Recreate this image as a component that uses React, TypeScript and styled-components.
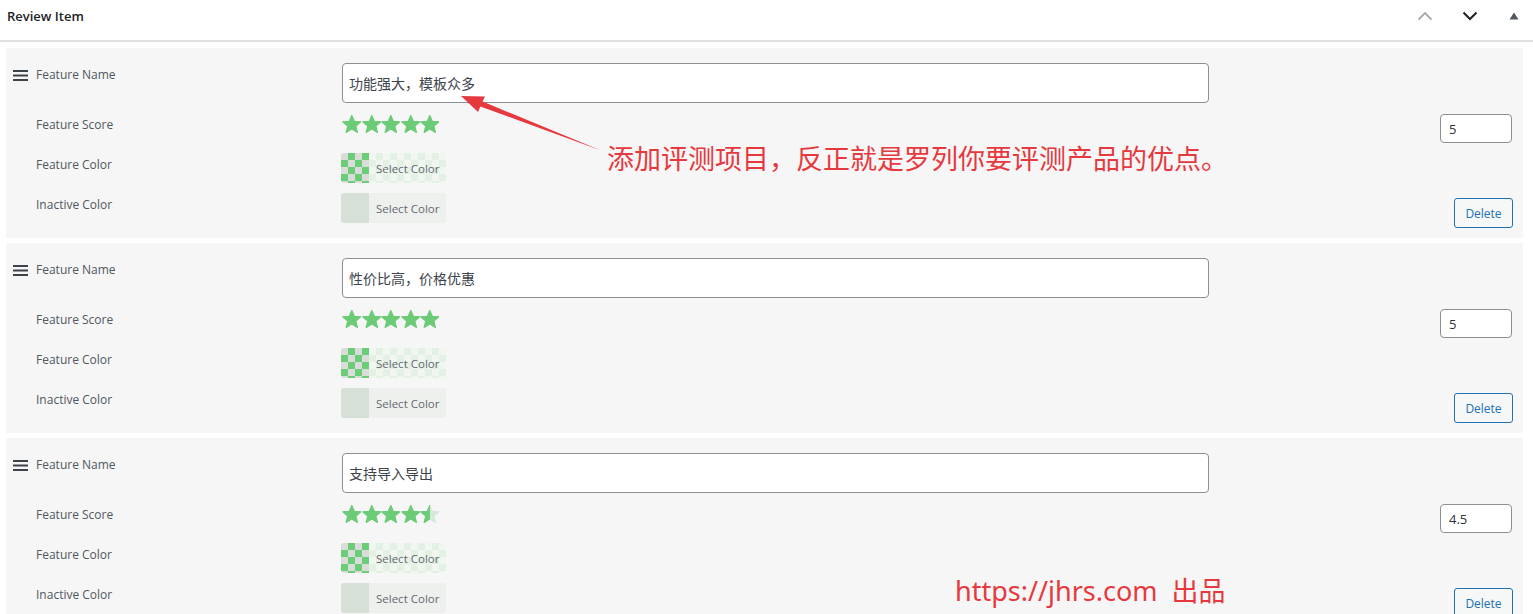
import React from "react";
import styled, { createGlobalStyle } from "styled-components";

const Global = createGlobalStyle`
  html, body { margin: 0; padding: 0; background: #ffffff; }
  body { font-family: "Open Sans", "Noto Sans", "Noto Sans CJK SC", sans-serif; }
  * { box-sizing: border-box; }
`;

const Page = styled.div`
  position: relative;
  width: 1533px;
  overflow: hidden;
`;

const Header = styled.div`
  height: 42px;
  display: flex;
  align-items: flex-start;
  padding: 7px 0 0 7px;
  border-bottom: 2px solid #e0e0e0;
`;

const Title = styled.h2`
  margin: 0;
  font-size: 13px;
  line-height: 18px;
  font-weight: 600;
  color: #1d2327;
  flex: 1;
`;

const HeaderButtons = styled.div`
  display: flex;
  align-items: center;
`;

const IconBtn = styled.span<{ $w: number }>`
  width: ${(p) => p.$w}px;
  height: 18px;
  display: flex;
  align-items: center;
  justify-content: center;
`;

const List = styled.div`
  display: flex;
  flex-direction: column;
  gap: 5px;
  margin: 6px 10px 0 6px;
`;

const Panel = styled.div`
  height: 190px;
  background: #f6f6f6;
  display: flex;
  padding: 15px 10px 0 7px;
`;

const Fields = styled.div`
  display: flex;
  flex-direction: column;
`;

const FieldRow = styled.div<{ $mt: number }>`
  display: grid;
  grid-template-columns: 329px 867px;
  align-items: start;
  margin-top: ${(p) => p.$mt}px;
`;

const Label = styled.div<{ $pad: number }>`
  display: flex;
  align-items: center;
  padding-top: ${(p) => p.$pad}px;
  font-size: 12px;
  line-height: 16px;
  color: #50575e;
`;

const Handle = styled.span`
  width: 23px;
  display: flex;
  align-items: center;
`;

const TextInput = styled.div`
  height: 40px;
  border: 1px solid #8c8f94;
  border-radius: 4px;
  background: #fff;
  display: flex;
  align-items: center;
  padding: 0 0 0 6px;
  font-size: 14px;
  color: #3c434a;
  font-family: "Noto Sans CJK SC", "Open Sans", sans-serif;
  font-weight: 400;
`;

const Stars = styled.div`
  display: flex;
  height: 20px;
  align-items: center;
`;

const ColorButton = styled.div<{ $inactive?: boolean }>`
  width: 105px;
  height: 30px;
  margin-left: -1px;
  border-radius: 3px;
  overflow: hidden;
  display: flex;
  align-items: center;
  background-color: ${(p) => (p.$inactive ? "#eef0ee" : "#f1f6f1")};
  background-image: ${(p) =>
    p.$inactive
      ? "none"
      : "linear-gradient(45deg, #e3f0e4 25%, transparent 25%, transparent 75%, #e3f0e4 75%), linear-gradient(45deg, #e3f0e4 25%, transparent 25%, transparent 75%, #e3f0e4 75%)"};
  background-size: 14px 14px;
  background-position: 0 0, 7px 7px;
`;

const Swatch = styled.span<{ $inactive?: boolean }>`
  width: 28px;
  height: 30px;
  flex: none;
  background-color: ${(p) => (p.$inactive ? "#d6e0d7" : "#d9dcd9")};
  background-image: ${(p) =>
    p.$inactive
      ? "none"
      : "linear-gradient(45deg, #6ccd78 25%, transparent 25%, transparent 75%, #6ccd78 75%), linear-gradient(45deg, #6ccd78 25%, transparent 25%, transparent 75%, #6ccd78 75%)"};
  background-size: 14px 14px;
  background-position: 0 0, 7px 7px;
`;

const SwatchText = styled.span`
  padding-left: 7px;
  font-size: 11.5px;
  color: #646970;
  white-space: nowrap;
`;

const Side = styled.div`
  margin-left: auto;
  display: flex;
  flex-direction: column;
  align-items: flex-end;
  padding-bottom: 10px;
`;

const NumberInput = styled.div`
  width: 72px;
  height: 29px;
  margin-top: 51px;
  margin-right: 1px;
  border: 1px solid #8c8f94;
  border-radius: 4px;
  background: #fff;
  display: flex;
  align-items: center;
  padding-left: 8px;
  font-size: 13px;
  color: #2c3338;
`;

const DeleteButton = styled.button`
  margin-top: auto;
  width: 59px;
  height: 30px;
  border: 1px solid #2271b1;
  border-radius: 3px;
  background: #f6f7f7;
  color: #2271b1;
  font-family: "Open Sans", sans-serif;
  font-size: 12px;
  padding: 0;
`;

const Note = styled.div<{ $x: number; $y: number }>`
  position: absolute;
  left: ${(p) => p.$x}px;
  top: ${(p) => p.$y}px;
  font-size: 27px;
  line-height: 27px;
  color: #e6393f;
  white-space: pre;
  font-family: "Noto Sans", "Noto Sans CJK SC", sans-serif;
`;

const Arrow = styled.svg`
  position: absolute;
  left: 0;
  top: 0;
  pointer-events: none;
`;

const GREEN = "#6bcb77";
const LIGHT = "#d5e9d7";
const STAR =
  "M10 1.2L12.59 7.24L19.3 7.8L14.18 12.16L15.75 18.6L10 15.2L4.25 18.6L5.82 12.16L0.7 7.8L7.41 7.24Z";

function Star({ fill }: { fill: number }) {
  const id = React.useId();
  return (
    <svg width="19.6" height="20" viewBox="0 0 20 20">
      <defs>
        <linearGradient id={id} x1="0" x2="1" y1="0" y2="0">
          <stop offset={fill} stopColor={GREEN} />
          <stop offset={fill} stopColor={LIGHT} />
        </linearGradient>
      </defs>
      <path
        d={STAR}
        fill={`url(#${id})`}
        stroke={`url(#${id})`}
        strokeWidth="1.2"
        strokeLinejoin="round"
      />
    </svg>
  );
}

function Hamburger() {
  return (
    <svg width="15" height="11" viewBox="0 0 15 11">
      <rect x="0" y="0" width="15" height="2" fill="#3c434a" />
      <rect x="0" y="4.5" width="15" height="2" fill="#3c434a" />
      <rect x="0" y="9" width="15" height="2" fill="#3c434a" />
    </svg>
  );
}

type Item = { name: string; score: number };
const items: Item[] = [
  { name: "功能强大，模板众多", score: 5 },
  { name: "性价比高，价格优惠", score: 5 },
  { name: "支持导入导出", score: 4.5 },
];

function Feature({ item }: { item: Item }) {
  return (
    <Panel>
      <Fields>
        <FieldRow $mt={0}>
          <Label $pad={4}>
            <Handle>
              <Hamburger />
            </Handle>
            Feature Name
          </Label>
          <TextInput>{item.name}</TextInput>
        </FieldRow>
        <FieldRow $mt={11}>
          <Label $pad={3}>
            <Handle />
            Feature Score
          </Label>
          <Stars>
            {[0, 1, 2, 3, 4].map((i) => (
              <Star key={i} fill={Math.max(0, Math.min(1, item.score - i))} />
            ))}
          </Stars>
        </FieldRow>
        <FieldRow $mt={19}>
          <Label $pad={4}>
            <Handle />
            Feature Color
          </Label>
          <ColorButton>
            <Swatch />
            <SwatchText>Select Color</SwatchText>
          </ColorButton>
        </FieldRow>
        <FieldRow $mt={10}>
          <Label $pad={4}>
            <Handle />
            Inactive Color
          </Label>
          <ColorButton $inactive>
            <Swatch $inactive />
            <SwatchText>Select Color</SwatchText>
          </ColorButton>
        </FieldRow>
      </Fields>
      <Side>
        <NumberInput>{item.score}</NumberInput>
        <DeleteButton>Delete</DeleteButton>
      </Side>
    </Panel>
  );
}

export default function App() {
  return (
    <Page>
      <Global />
      <Header>
        <Title>Review Item</Title>
        <HeaderButtons>
          <IconBtn $w={40}>
            <svg width="16" height="10" viewBox="0 0 16 10">
              <path d="M1.5 8.5L8 2l6.5 6.5" fill="none" stroke="#a7aaad" strokeWidth="1.8" />
            </svg>
          </IconBtn>
          <IconBtn $w={50}>
            <svg width="16" height="10" viewBox="0 0 16 10">
              <path d="M1.5 1.5L8 8l6.5-6.5" fill="none" stroke="#1d2327" strokeWidth="2" />
            </svg>
          </IconBtn>
          <IconBtn $w={38}>
            <svg width="10" height="8" viewBox="0 0 10 8">
              <path d="M5 0.5L9.5 7.5H0.5z" fill="#50575e" />
            </svg>
          </IconBtn>
        </HeaderButtons>
      </Header>
      <List>
        {items.map((it, i) => (
          <Feature key={i} item={it} />
        ))}
      </List>
      <Arrow width="1533" height="614" viewBox="0 0 1533 614">
        <polygon
          points="461,96 485,96.5 482.6,101.6 601,150.5 480.4,106.4 478,112"
          fill="#e6393f"
        />
      </Arrow>
      <Note $x={607} $y={145}>添加评测项目，反正就是罗列你要评测产品的优点。</Note>
      <Note $x={955} $y={577}>{"https://jhrs.com  出品"}</Note>
    </Page>
  );
}
